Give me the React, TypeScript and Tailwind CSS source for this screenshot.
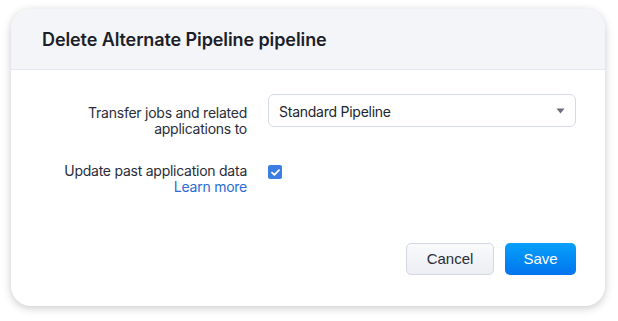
const FONT = { fontFamily: 'Inter, "Noto Sans", sans-serif' };

export default function App() {
  return (
    <div className="w-[618px] h-[321px] bg-white pt-[9px] pl-[11px]" style={FONT}>
      <div className="w-[594px] h-[297px] rounded-[20px] bg-white shadow-[0_2px_9px_rgba(0,0,0,0.22)] overflow-hidden flex flex-col">
        {/* header */}
        <div className="h-[61px] shrink-0 bg-[#f4f5f8] border-b border-[#e3e6ee] flex items-center pl-[31px]">
          <h1 className="text-[18px] font-semibold text-[#1c1e29] tracking-[-0.1px]">Delete Alternate Pipeline pipeline</h1>
        </div>

        {/* body */}
        <div className="grid grid-cols-[236px_1fr] gap-x-[21px] pr-[29px] pt-[24px] text-[14px] tracking-[-0.25px]">
          <div className="text-right leading-[16px] text-[#2a2d39] pt-[11px]">
            Transfer jobs and related
            <br />
            applications to
          </div>
          <div className="h-[33px] rounded-[6px] border border-[#d6dae3] flex items-center justify-between pl-[10px] pr-[10px] pt-[2px]">
            <span className="text-[#22252f]">Standard Pipeline</span>
            <svg width="9" height="6" viewBox="0 0 9 6" className="-mt-[2px]">
              <path d="M0.5 0.5h8L4.5 5.5z" fill="#6b6f7b" />
            </svg>
          </div>

          <div className="text-right leading-[16px] text-[#2a2d39] mt-[26px]">
            Update past application data
            <br />
            <span className="text-[#2e6cd2]">Learn more</span>
          </div>
          <div className="mt-[28px]">
            <div className="w-[14px] h-[14px] rounded-[2px] bg-[#3b7de0] flex items-center justify-center">
              <svg width="9" height="7" viewBox="0 0 9 7">
                <path d="M1 3.6 3.4 5.8 8 1.2" fill="none" stroke="white" strokeWidth="1.8" strokeLinecap="round" strokeLinejoin="round" />
              </svg>
            </div>
          </div>
        </div>

        {/* footer */}
        <div className="mt-auto flex justify-end gap-[11px] pr-[29px] pb-[31px]" style={{ fontFamily: '"Liberation Sans", Arial, sans-serif' }}>
          <button className="w-[88px] h-[32px] rounded-[5px] border border-[#d3d7df] bg-gradient-to-b from-[#f9fafc] to-[#eceef3] text-[15px] text-[#2b2d35]">
            Cancel
          </button>
          <button className="w-[71px] h-[32px] rounded-[5px] bg-gradient-to-b from-[#0aa0fb] to-[#0574ee] text-[15px] text-white">
            Save
          </button>
        </div>
      </div>
    </div>
  );
}
